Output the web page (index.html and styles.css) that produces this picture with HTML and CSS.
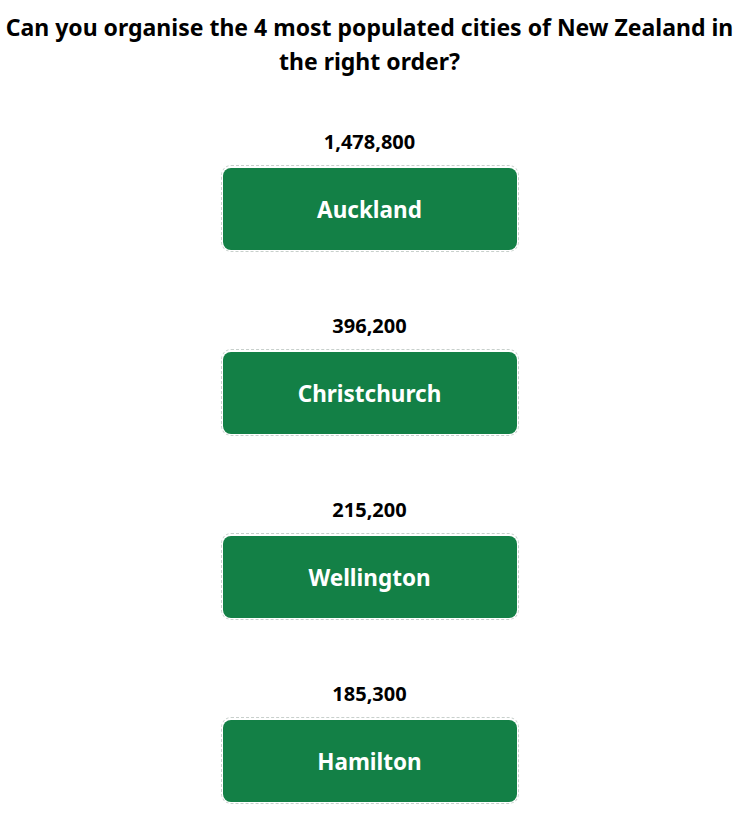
FILE: index.html
```html
<!DOCTYPE html>
<html lang="en">
<head>
    <meta charset="UTF-8">
    <meta name="viewport" content="width=device-width, initial-scale=1.0">
    <title>NZ Cities</title>
    <link rel="stylesheet" href="styles.css">
</head>
<body>
    <h1>Can you organise the 4 most populated cities of New Zealand in the right order?</h1>
    <div class="cities">
        <div class="city">
            <div class="population">1,478,800</div>
            <div class="slot"><div class="card">Auckland</div></div>
        </div>
        <div class="city">
            <div class="population">396,200</div>
            <div class="slot"><div class="card">Christchurch</div></div>
        </div>
        <div class="city">
            <div class="population">215,200</div>
            <div class="slot"><div class="card">Wellington</div></div>
        </div>
        <div class="city">
            <div class="population">185,300</div>
            <div class="slot"><div class="card">Hamilton</div></div>
        </div>
    </div>
</body>
</html>
```
FILE: styles.css
```css
body {
    font-family: "Noto Sans", "Open Sans", sans-serif;
    margin: 0;
    padding: 0 2px;
    background: #ffffff;
    color: #000000;
}
h1 {
    text-align: center;
    font-size: 23px;
    line-height: 34px;
    margin: 10px 0 0;
}
.cities {
    display: flex;
    flex-direction: column;
    align-items: center;
    gap: 62px;
    margin-top: 52px;
}
.city {
    display: flex;
    flex-direction: column;
    align-items: center;
    gap: 11px;
}
.population {
    font-size: 20px;
    font-weight: bold;
    line-height: 24px;
}
.slot {
    border: 1px dashed #c8d0cc;
    border-radius: 10px;
    padding: 2px 1px 1px;
}
.card {
    width: 294px;
    height: 82px;
    border-radius: 8px;
    background-color: #138046;
    color: #ffffff;
    font-size: 22.5px;
    font-weight: bold;
    display: flex;
    align-items: center;
    justify-content: center;
}
```
